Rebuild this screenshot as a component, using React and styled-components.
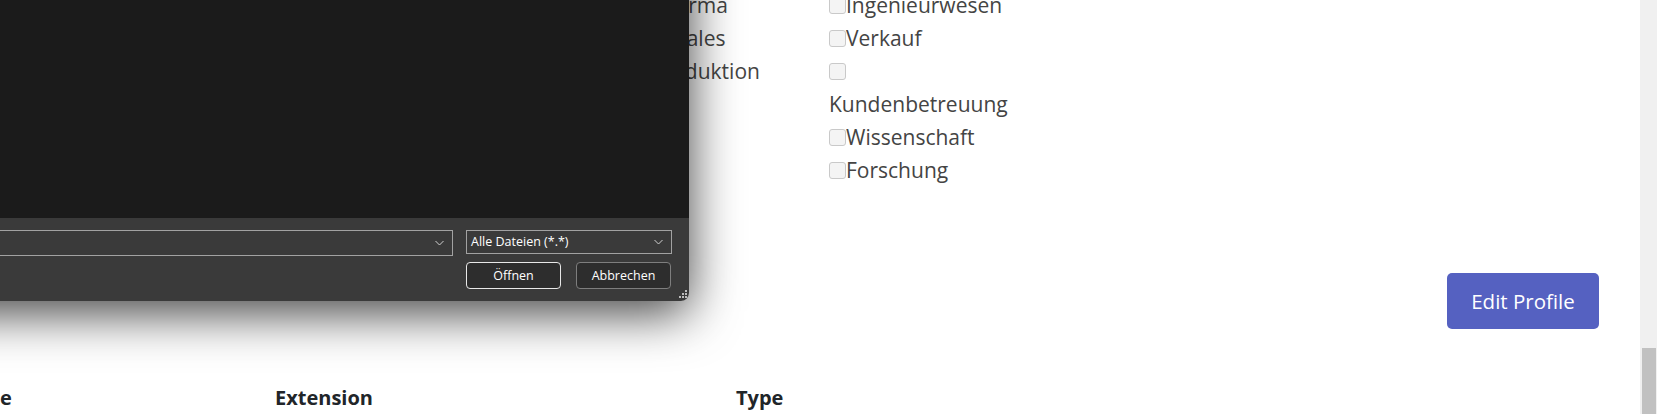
import React from 'react';
import styled, { createGlobalStyle } from 'styled-components';

const GlobalStyle = createGlobalStyle`
  html, body { margin: 0; padding: 0; background: #fff; overflow: hidden; }
  body { font-family: "Open Sans", "Noto Sans", sans-serif; }
  * { box-sizing: border-box; }
`;

const Viewport = styled.div`
  display: flex;
  width: 1657px;
  height: 414px;
  overflow: hidden;
`;

const Main = styled.div`
  position: relative;
  flex: 1;
  min-width: 0;
  overflow: hidden;
`;

const Page = styled.div`
  display: flex;
  flex-direction: column;
`;

const OptionsGrid = styled.div`
  display: grid;
  grid-template-columns: 178px 220px;
  margin-top: -11px;
  padding-left: 651px;
  font-size: 21px;
  line-height: 33px;
  color: #444444;
`;

const OptionColumn = styled.div`
  display: flex;
  flex-direction: column;
  width: ${p => p.$width}px;
`;

const PlainLabel = styled.div`
  white-space: nowrap;
`;

const CheckItem = styled.label`
  display: block;
`;

const Box = styled.span`
  display: inline-block;
  width: 17px;
  height: 17px;
  border: 1px solid #c9c9c9;
  border-radius: 3px;
  background: #f4f4f4;
  vertical-align: -1px;
`;

const Actions = styled.div`
  display: flex;
  justify-content: flex-end;
  margin-top: 86px;
  padding-right: 41px;
`;

const PrimaryButton = styled.button`
  height: 56px;
  width: 152px;
  padding: 0;
  border: none;
  border-radius: 5px;
  background: #5561c1;
  color: #fff;
  font-family: "Open Sans", "Noto Sans", sans-serif;
  font-size: 20.5px;
`;

const TableHead = styled.div`
  display: grid;
  grid-template-columns: 323px 461px 1fr;
  margin: 54px 0 0 -48px;
  font-size: 20px;
  line-height: 30px;
  font-weight: 700;
  color: #212529;
`;

const Dialog = styled.div`
  position: absolute;
  left: -311px;
  top: -100px;
  width: 1000px;
  height: 401px;
  display: flex;
  flex-direction: column;
  border-radius: 0 0 8px 0;
  overflow: hidden;
  box-shadow: 0 12px 50px rgba(0, 0, 0, 0.75);
  font-family: "Open Sans", "Noto Sans", sans-serif;
  font-size: 12px;
  color: #fff;
`;

const FileList = styled.div`
  flex: 1;
  background: #1b1b1b;
`;

const Footer = styled.div`
  position: relative;
  height: 83px;
  background: #3a3a3a;
  display: grid;
  grid-template-columns: 1fr 206px;
  grid-template-rows: 26px 27px;
  column-gap: 13px;
  row-gap: 6px;
  align-items: start;
  padding: 12px 17px 0 0;
`;

const Combo = styled.div`
  display: flex;
  align-items: center;
  justify-content: space-between;
  height: ${p => p.$h}px;
  border: 1px solid #a2a2a2;
  background: #3a3a3a;
  padding: 0 8px 0 4px;
  line-height: 1;
  font-size: 12.5px;
`;

const ButtonRow = styled.div`
  grid-column: 2;
  display: flex;
  gap: 15px;
`;

const DialogButton = styled.button`
  width: 95px;
  height: 27px;
  border-radius: 4px;
  border: 1px solid ${p => (p.$default ? '#e8e8e8' : '#7e7e7e')};
  background: #2d2d2d;
  color: #fff;
  font-family: "Open Sans", "Noto Sans", sans-serif;
  font-size: 12.5px;
  padding: 0;
`;

const Grip = styled.svg`
  position: absolute;
  right: 2px;
  bottom: 3px;
`;

const Scrollbar = styled.div`
  width: 17px;
  height: 100%;
  background: #f0f0f0;
  display: flex;
  flex-direction: column;
`;

const Thumb = styled.div`
  margin: auto 1px 0 2px;
  height: 66px;
  background: #c1c1c1;
`;

const Chevron = () => (
  <svg width="9" height="6" viewBox="0 0 9 6">
    <path d="M0.5 1 L4.5 5 L8.5 1" fill="none" stroke="#cfcfcf" strokeWidth="1" />
  </svg>
);

export default function App() {
  return (
    <>
      <GlobalStyle />
      <Viewport>
        <Main>
          <Page>
            <OptionsGrid>
              <OptionColumn $width={178}>
                <PlainLabel>Pharma</PlainLabel>
                <PlainLabel>IT-Sales</PlainLabel>
                <PlainLabel>Produktion</PlainLabel>
              </OptionColumn>
              <OptionColumn $width={180}>
                <CheckItem><Box />Ingenieurwesen</CheckItem>
                <CheckItem><Box />Verkauf</CheckItem>
                <CheckItem><Box /> Kundenbetreuung</CheckItem>
                <CheckItem><Box />Wissenschaft</CheckItem>
                <CheckItem><Box />Forschung</CheckItem>
              </OptionColumn>
            </OptionsGrid>
            <Actions>
              <PrimaryButton>Edit Profile</PrimaryButton>
            </Actions>
            <TableHead>
              <div>Name</div>
              <div>Extension</div>
              <div>Type</div>
            </TableHead>
          </Page>

          <Dialog>
            <FileList />
            <Footer>
              <Combo $h={26}>
                <span />
                <Chevron />
              </Combo>
              <Combo $h={24}>
                <span>Alle Dateien (*.*)</span>
                <Chevron />
              </Combo>
              <ButtonRow>
                <DialogButton $default>Öffnen</DialogButton>
                <DialogButton>Abbrechen</DialogButton>
              </ButtonRow>
              <Grip width="8" height="8" viewBox="0 0 8 8">
                <rect x="6" y="0" width="2" height="2" fill="#bdbdbd" />
                <rect x="3" y="3" width="2" height="2" fill="#bdbdbd" />
                <rect x="6" y="3" width="2" height="2" fill="#bdbdbd" />
                <rect x="0" y="6" width="2" height="2" fill="#bdbdbd" />
                <rect x="3" y="6" width="2" height="2" fill="#bdbdbd" />
                <rect x="6" y="6" width="2" height="2" fill="#bdbdbd" />
              </Grip>
            </Footer>
          </Dialog>
        </Main>
        <Scrollbar>
          <Thumb />
        </Scrollbar>
      </Viewport>
    </>
  );
}
